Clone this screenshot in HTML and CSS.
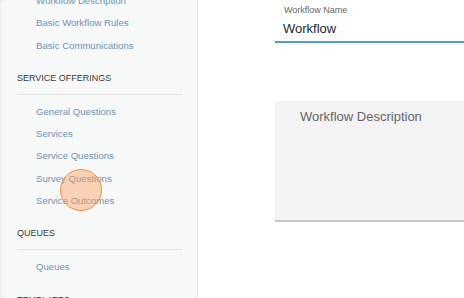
FILE: index.html
```html
<!DOCTYPE html>
<html>
<head>
  <meta charset="UTF-8">
  <title>Workflow</title>
  <link rel="stylesheet" href="styles.css">
</head>
<body>
  <div class="app">
    <aside class="sidebar">
      <div class="nav">
        <ul class="nav-list first">
          <li>Workflow Description</li>
          <li>Basic Workflow Rules</li>
          <li>Basic Communications</li>
        </ul>

        <div class="section-title">SERVICE OFFERINGS</div>
        <ul class="nav-list">
          <li>General Questions</li>
          <li>Services</li>
          <li>Service Questions</li>
          <li>Survey Questions</li>
          <li>Service Outcomes</li>
        </ul>

        <div class="section-title">QUEUES</div>
        <ul class="nav-list">
          <li>Queues</li>
        </ul>

        <div class="section-title">TEMPLATES</div>
      </div>
      <span class="tap"></span>
    </aside>

    <main class="content">
      <div class="field">
        <label class="field-label">Workflow Name</label>
        <div class="field-value">Workflow</div>
      </div>

      <div class="textarea">
        <span class="placeholder">Workflow Description</span>
      </div>
    </main>
  </div>
</body>
</html>
```

FILE: styles.css
```css
html, body {
  margin: 0;
  height: 100%;
  overflow: hidden;
}

body {
  font-family: "Liberation Sans", Arial, sans-serif;
  background-color: #eef0f0;
}

.app {
  display: flex;
  height: 298px;
}

.sidebar {
  position: relative;
  width: 195px;
  margin-left: 2px;
  background-color: #f7f9f9;
  border-right: 1px solid #e6e9e9;
  border-top-left-radius: 6px;
  overflow: hidden;
  flex-shrink: 0;
}

.nav {
  margin-top: -10px;
  padding: 0 15px 0 15px;
}

.nav-list {
  list-style: none;
  margin: 0;
  padding: 6px 0 0 19px;
}

.nav-list.first {
  padding-top: 0;
}

.nav-list li {
  font-size: 9.6px;
  line-height: 22.3px;
  color: #6f93b3;
}

.section-title {
  font-size: 9px;
  color: #3a3a3a;
  padding: 16px 0 11px 0;
  border-bottom: 1px solid #e3e5e5;
}

.tap {
  position: absolute;
  left: 58px;
  top: 169px;
  width: 40px;
  height: 40px;
  border-radius: 50%;
  background-color: rgba(250, 160, 95, 0.45);
  border: 1.5px solid #f39440;
}

.content {
  flex: 1;
  background-color: #ffffff;
  padding-left: 77px;
  overflow: hidden;
}

.field {
  width: 260px;
  padding-top: 5px;
  border-bottom: 2px solid #4b9fdc;
}

.field-label {
  display: block;
  font-size: 9px;
  color: #666666;
  padding-left: 9px;
}

.field-value {
  font-size: 13px;
  color: #1f1f1f;
  padding: 6px 0 5px 8px;
}

.textarea {
  width: 260px;
  height: 119px;
  margin-top: 58px;
  background-color: #f3f3f3;
  border-bottom: 2px solid #c9c9c9;
}

.placeholder {
  display: block;
  font-size: 13px;
  color: #666666;
  padding: 8px 0 0 25px;
}
```
